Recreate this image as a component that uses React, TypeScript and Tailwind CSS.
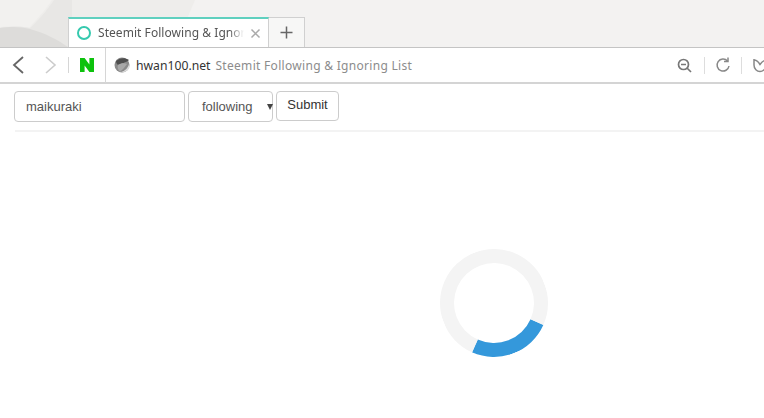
const tabFont = "font-['Noto_Sans','Open_Sans',sans-serif]";

const Divider = () => <div className="h-[17px] w-px bg-[#dddddd]" />;

const App = () => {
  return (
    <div className="h-[418px] w-[764px] overflow-hidden bg-white font-['Liberation_Sans',Arial,sans-serif]">
      {/* Tab strip */}
      <div className="relative flex h-[48px] items-end border-b border-[#c4c4c4] bg-[#f3f2f1] pl-[68px]">
        <svg className="absolute left-0 top-0" width="200" height="47" viewBox="0 0 200 47">
          <path d="M0 0H195L175 47H0Z" fill="#eeedeb" />
          <path d="M52 0H0V27C12 26 22 27 29 28C39 17 47 8 52 0Z" fill="#f2f1ef" />
          <path d="M30 28C42 17 50 6 54 0H72V47H0V28C12 26 22 26 30 28Z" fill="#e8e7e5" />
          <path d="M0 28C12 26 22 27 30 29C45 33 58 40 68 47H0Z" fill="#dddcda" />
        </svg>
        <div className="relative flex h-[30px] w-[201px] items-center border-x border-[#d0d0d0] border-t-2 border-t-[#5fd0bf] bg-white pl-[8px]">
          <span className="h-[14px] w-[14px] shrink-0 rounded-full border-2 border-[#35c9ae]" />
          <span className={`ml-[7px] w-[146px] whitespace-nowrap text-[12px] tracking-[0.05px] text-[#555555] [mask-image:linear-gradient(to_right,black_90%,transparent)] ${tabFont}`}>
            Steemit Following &amp; Ignor
          </span>
          <svg className="ml-[6px]" width="11" height="11" viewBox="0 0 11 11" stroke="#aaaaaa" strokeWidth="1.5">
            <path d="M1.5 1.5L9.5 9.5M9.5 1.5L1.5 9.5" />
          </svg>
        </div>
        <div className="relative flex h-[30px] w-[36px] items-center justify-center border-r border-t border-[#d0d0d0] bg-[#f7f7f6]">
          <svg width="13" height="13" viewBox="0 0 13 13" stroke="#666666" strokeWidth="1.5">
            <path d="M6.5 0.5V12.5M0.5 6.5H12.5" />
          </svg>
        </div>
      </div>

      {/* Address bar */}
      <div className="flex h-[36px] items-center border-b-2 border-[#d4d4d4]">
        <svg className="ml-[12px] shrink-0" width="12" height="18" viewBox="0 0 12 18" fill="none" stroke="#666666" strokeWidth="1.8">
          <path d="M11 1L2 9L11 17" />
        </svg>
        <svg className="ml-[21px] shrink-0" width="12" height="18" viewBox="0 0 12 18" fill="none" stroke="#cccccc" strokeWidth="1.6">
          <path d="M1 1L10 9L1 17" />
        </svg>
        <div className="ml-[11px] h-[16px] w-px bg-[#d6d6d6]" />
        <span className="ml-[11px] flex h-[14px] w-[14px] items-center justify-center">
          <svg width="14" height="14" viewBox="0 0 14 14">
            <path d="M0 0H4.6L9.4 6.6V0H14V14H9.4L4.6 7.4V14H0Z" fill="#0dc20d" />
          </svg>
        </span>
        <div className="ml-[11px] h-[36px] w-px bg-[#d6d6d6]" />
        <svg className="ml-[8px] shrink-0" width="16" height="17" viewBox="0 0 16 17">
          <circle cx="8" cy="8" r="7.5" fill="#8a8a8a" />
          <path d="M2 4C5 1 11 0 15 3C12 6 7 6 4 8C3 7 2 6 2 4Z" fill="#4e4e4e" />
          <path d="M7 15C11 14 14 11 15 7L15.5 10C15 13 11 16 7 15Z" fill="#dddddd" />
          <path d="M4 8C7 6 11 6 13 7C11 10 8 13 6 15C4 13 3 10 4 8Z" fill="#a8a8a8" />
        </svg>
        <span className={`ml-[6px] mt-[2px] whitespace-nowrap text-[12.2px] text-[#333333] ${tabFont}`}>hwan100.net</span>
        <span className={`ml-[5px] mt-[2px] whitespace-nowrap text-[12px] tracking-[0.3px] text-[#8c8c8c] ${tabFont}`}>
          Steemit Following &amp; Ignoring List
        </span>
        <div className="ml-auto flex items-center">
          <svg className="shrink-0" width="15" height="15" viewBox="0 0 15 15" fill="none" stroke="#777777" strokeWidth="1.7">
            <circle cx="6.5" cy="6.5" r="5" />
            <path d="M4 6.5H9M10 10L14 14" />
          </svg>
          <div className="ml-[12px]">
            <Divider />
          </div>
          <svg className="ml-[10px] shrink-0" width="15" height="16" viewBox="0 0 15 16" fill="none" stroke="#888888" strokeWidth="1.5">
            <path d="M12.5 4A6 6 0 1 0 14 9" />
            <path d="M9 4.5H13V0.5" />
          </svg>
          <div className="ml-[11px]">
            <Divider />
          </div>
          <div className="ml-[11px] w-[11px] overflow-hidden">
            <svg className="shrink-0" width="14" height="16" viewBox="0 0 14 16" fill="none" stroke="#888888" strokeWidth="1.5">
              <path d="M1 2V8C1 12 4 14.5 7 14.5C10 14.5 13 12 13 8V2M1 3C4 3 5.5 5 7 7.5C8.5 5.5 10 3.5 13 3" />
            </svg>
          </div>
        </div>
      </div>

      {/* Form */}
      <form className="ml-[14px] mt-[7px] flex items-start text-[13px] text-[#555555]">
        <input
          readOnly
          value="maikuraki"
          className="h-[31px] w-[171px] rounded border border-[#cccccc] bg-white px-[11px] text-[#555555] outline-none"
        />
        <div className="ml-[3px] flex h-[31px] w-[85px] items-center rounded border border-[#cccccc] pl-[13px]">
          <span>following</span>
          <span className="ml-[14px] h-0 w-0 border-x-[3px] border-t-[6px] border-x-transparent border-t-[#444444]" />
        </div>
        <button type="button" className="ml-[3px] h-[30px] w-[63px] rounded border border-[#cccccc] bg-white pb-[2px] text-[#333333]">
          Submit
        </button>
      </form>
      <div className="ml-[15px] mt-[8px] h-[2px] bg-[#f3f3f3]" />

      {/* Loader */}
      <div className="ml-[440px] mt-[117px] h-[108px] w-[108px] rotate-[159deg] rounded-full border-[14px] border-[#f4f4f4] border-t-[#3498db]" />
    </div>
  );
};

export default App;
